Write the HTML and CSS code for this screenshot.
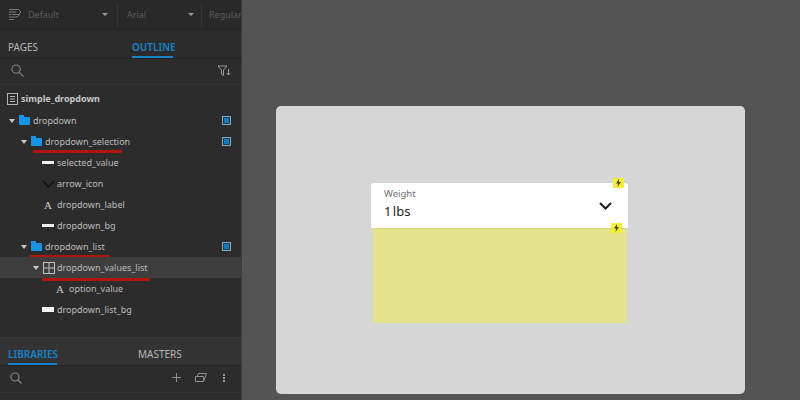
FILE: index.html
```html
<!DOCTYPE html>
<html>
<head>
  <title>simple_dropdown</title>
  <meta name="viewport" content="width=device-width, initial-scale=1">
  <link rel="stylesheet" href="styles.css">
</head>
<body>
  <div class="app">
    <aside class="sidebar">
      <div class="toolbar">
        <svg class="style-icon" width="15" height="14" viewBox="0 0 15 14" fill="none" stroke="#77787a" stroke-width="1">
          <path d="M1 1.500h9.500l2.500 2.500-2.500 2.500H4M1 4h7M1 6.500h2M1 9h8M1 11.500h5M9 9l3-2.500"/>
        </svg>
        <div class="tool-field field-style"><span>Default</span><i class="caret"></i></div>
        <div class="tool-field field-font"><span>Arial</span><i class="caret"></i></div>
        <div class="tool-field field-weight"><span>Regular</span></div>
      </div>

      <div class="tabs tabs-top">
        <div class="tab tab-pages">PAGES</div>
        <div class="tab tab-outline active">OUTLINE</div>
      </div>

      <div class="search-row">
        <svg width="13" height="13" viewBox="0 0 14 14" fill="none" stroke="#8a8a8a" stroke-width="1.100">
          <circle cx="5.500" cy="5.500" r="4.500"/><path d="M9 9l4.500 4.500"/>
        </svg>
        <svg width="14" height="12" viewBox="0 0 14 12" fill="none" stroke="#9a9a9a" stroke-width="1">
          <path d="M1 1h9L6.500 5v5.500L4.500 9V5zM11.500 4v6M9.500 8l2 2 2-2"/>
        </svg>
      </div>

      <div class="tree">
        <div class="row row-page">
          <svg class="page-icon" width="11" height="12" viewBox="0 0 11 12" fill="none" stroke="#b5b5b5"><rect x="0.500" y="0.500" width="10" height="11"/><path d="M3 3.500h5M3 6h5M3 8.500h5"/></svg>
          <span class="page-name">simple_dropdown</span>
        </div>
        <div class="row indent-1">
          <i class="arrow"></i><i class="folder"></i><span>dropdown</span><i class="sym"></i>
        </div>
        <div class="row indent-2">
          <i class="arrow"></i><i class="folder"></i><span>dropdown_selection</span><i class="sym"></i>
          <u class="mark mark-selection"></u>
        </div>
        <div class="row indent-3"><i class="rect"></i><span>selected_value</span></div>
        <div class="row indent-3">
          <svg class="chev" width="13" height="8" viewBox="0 0 13 8" fill="none" stroke="#111" stroke-width="1.600"><path d="M1 1l5.500 6L12 1"/></svg>
          <span>arrow_icon</span>
        </div>
        <div class="row indent-3"><b class="type-a">A</b><span>dropdown_label</span></div>
        <div class="row indent-3"><i class="rect"></i><span>dropdown_bg</span></div>
        <div class="row indent-2">
          <i class="arrow"></i><i class="folder"></i><span>dropdown_list</span><i class="sym"></i>
          <u class="mark mark-list"></u>
        </div>
        <div class="row row-selected indent-2b">
          <i class="arrow"></i>
          <svg class="grid-icon" width="12" height="12" viewBox="0 0 12 12" fill="none" stroke="#c4c4c4"><rect x="0.500" y="0.500" width="11" height="11"/><path d="M6 0.500v11M0.500 6h11"/></svg>
          <span>dropdown_values_list</span>
          <u class="mark mark-values"></u>
        </div>
        <div class="row indent-4"><b class="type-a">A</b><span>option_value</span></div>
        <div class="row indent-3"><i class="rect rect-tall"></i><span>dropdown_list_bg</span></div>
      </div>

      <div class="tabs tabs-bottom">
        <div class="tab tab-libraries active">LIBRARIES</div>
        <div class="tab tab-masters">MASTERS</div>
      </div>

      <div class="lib-row">
        <svg width="12" height="12" viewBox="0 0 12 12" fill="none" stroke="#8a8a8a" stroke-width="1.100">
          <circle cx="5" cy="5" r="4"/><path d="M8 8l3.500 3.500"/>
        </svg>
        <span class="lib-plus">
          <svg width="9" height="9" viewBox="0 0 9 9" stroke="#8f8f8f"><path d="M4.500 0v9M0 4.500h9"/></svg>
        </span>
        <svg class="lib-box" width="12" height="9" viewBox="0 0 12 9" fill="none" stroke="#8f8f8f"><path d="M0.500 3.500h8v5h-8zM2 3.500l1.500-3h8l-3 8"/></svg>
        <span class="lib-dots"><i></i><i></i><i></i></span>
      </div>
    </aside>

    <main class="canvas">
      <div class="artboard">
        <div class="dropdown">
          <div class="dropdown-text">
            <div class="dropdown-label">Weight</div>
            <div class="dropdown-value">1 lbs</div>
          </div>
          <svg width="13" height="8" viewBox="0 0 13 8" fill="none" stroke="#1c1c1c" stroke-width="2"><path d="M1 1l5.500 5.500L12 1"/></svg>
          <span class="bolt bolt-top">
            <svg width="5" height="8" viewBox="0 0 5 8" fill="#4a4a1c"><path d="M3 0L0 4.500h2L1.500 8 5 3H3z"/></svg>
          </span>
        </div>
        <div class="value-list">
          <span class="bolt bolt-list">
            <svg width="5" height="8" viewBox="0 0 5 8" fill="#4a4a1c"><path d="M3 0L0 4.500h2L1.500 8 5 3H3z"/></svg>
          </span>
        </div>
      </div>
    </main>
  </div>
</body>
</html>
```

FILE: styles.css
```css
html, body {
  margin: 0;
  height: 100%;
  overflow: hidden;
}
body {
  font-family: "Noto Sans", "Open Sans", sans-serif;
  font-size: 9px;
  color: #bdbdbd;
  background: #545454;
}
i, u {
  display: block;
  text-decoration: none;
}
.app {
  display: flex;
  width: 800px;
  height: 400px;
}

/* left panel */
.sidebar {
  width: 242px;
  height: 400px;
  flex: none;
  display: flex;
  flex-direction: column;
  padding-bottom: 7px;
  box-sizing: border-box;
  background: #2c2c2c;
  border-right: 1px solid #3c3c3c;
  overflow: hidden;
}
.toolbar {
  height: 30px;
  flex: none;
  display: flex;
  align-items: center;
  padding-left: 8px;
  background: #292929;
  border-bottom: 1px solid #232323;
  box-sizing: border-box;
  color: #5c5c5c;
}
.style-icon {
  flex: none;
  margin-right: 5px;
}
.tool-field {
  height: 24px;
  display: flex;
  align-items: center;
  justify-content: space-between;
  box-sizing: border-box;
  flex: none;
}
.field-style {
  width: 90px;
  padding-right: 9px;
  border-right: 1px solid #363636;
}
.field-font {
  width: 84px;
  padding: 0 7px 0 9px;
  border-right: 1px solid #363636;
}
.field-weight {
  padding-left: 7px;
}
.caret {
  width: 0;
  height: 0;
  border: 3px solid transparent;
  border-top: 3px solid #9a9a9a;
  border-bottom: 0;
}

.tabs {
  flex: none;
  display: flex;
  box-sizing: border-box;
  font-size: 10px;
}
.tabs-top {
  height: 29px;
  padding-top: 10px;
  border-bottom: 1px solid #242424;
}
.tabs-bottom {
  height: 29px;
  padding-top: 9px;
  background: #333;
  border-top: 1px solid #3a3a3a;
  border-bottom: 1px solid #242424;
}
.tab {
  height: 18px;
  color: #b6b6b6;
  box-sizing: border-box;
  line-height: 14px;
}
.tab.active {
  color: #1583c8;
  font-weight: 600;
  border-bottom: 2px solid #1583c8;
}
.tab-pages {
  margin-left: 8px;
  width: 124px;
}
.tab-outline {
  width: 41px;
}
.tab-libraries {
  margin-left: 8px;
  width: 49px;
}
.tab-masters {
  margin-left: 81px;
}

.search-row {
  height: 26px;
  flex: none;
  display: flex;
  align-items: center;
  justify-content: space-between;
  padding: 0 10px 2px 11px;
  box-sizing: border-box;
  border-bottom: 1px solid #333;
}

/* outline tree */
.tree {
  flex: 1;
  padding-top: 3px;
}
.row {
  position: relative;
  height: 21px;
  display: flex;
  align-items: center;
  white-space: nowrap;
}
.row-page {
  padding-left: 7px;
  gap: 3px;
  margin-bottom: 1px;
}
.page-name {
  font-weight: 700;
  color: #c8c8c8;
}
.indent-1 { padding-left: 9px; }
.indent-2 { padding-left: 21px; }
.indent-2b { padding-left: 33px; }
.indent-3 { padding-left: 42px; }
.indent-4 { padding-left: 54px; }
.arrow {
  width: 0;
  height: 0;
  margin-right: 4px;
  border: 3px solid transparent;
  border-top: 4px solid #c8c8c8;
  border-bottom: 0;
}
.folder {
  position: relative;
  width: 11px;
  height: 8px;
  margin: 1px 3px 0 0;
  background: #1794e6;
  border-radius: 0 1px 1px 1px;
}
.folder::before {
  content: "";
  position: absolute;
  left: 0;
  top: -2px;
  width: 5px;
  height: 2px;
  background: #1794e6;
}
.sym {
  position: absolute;
  left: 222px;
  top: 6px;
  width: 7px;
  height: 7px;
  background: #1a78b8;
  border: 1px solid #7fa8c4;
  box-shadow: inset 0 0 0 1px #1f3f55;
}
.rect {
  width: 12px;
  height: 3px;
  margin-right: 3px;
  background: #f2f2f2;
  flex: none;
}
.rect-tall {
  height: 5px;
}
.chev {
  flex: none;
  margin-right: 2px;
}
.type-a {
  width: 12px;
  margin-right: 3px;
  flex: none;
  font-family: "Liberation Serif", serif;
  font-size: 11px;
  font-weight: 400;
  text-align: center;
  color: #d0d0d0;
}
.grid-icon {
  flex: none;
  margin-right: 2px;
}
.row-selected {
  background: #3e3e3e;
}

/* red marks drawn over the tree */
.mark {
  position: absolute;
  height: 3px;
  background: #b3140e;
  border-radius: 1px;
}
.mark-selection {
  left: 33px;
  top: 19px;
  width: 89px;
}
.mark-list {
  left: 29px;
  top: 19px;
  width: 80px;
}
.mark-values {
  left: 42px;
  top: 21px;
  width: 108px;
}

.lib-row {
  height: 27px;
  flex: none;
  display: flex;
  align-items: center;
  padding: 0 0 3px 10px;
  box-sizing: border-box;
  border-bottom: 1px solid #333;
}
.lib-plus {
  margin-left: 150px;
  display: flex;
}
.lib-box {
  margin-left: 14px;
}
.lib-dots {
  margin-left: 16px;
  display: flex;
  flex-direction: column;
  gap: 1px;
}
.lib-dots i {
  width: 2px;
  height: 2px;
  background: #9a9a9a;
}

/* canvas */
.canvas {
  flex: 1;
  padding: 106px 55px 6px 34px;
  box-sizing: border-box;
  background: #545454;
}
.artboard {
  width: 469px;
  height: 288px;
  padding: 77px 0 0 95px;
  box-sizing: border-box;
  background: #d6d6d6;
  border-radius: 5px;
}
.dropdown {
  position: relative;
  width: 257px;
  height: 45px;
  padding: 0 16px 0 13px;
  display: flex;
  align-items: center;
  justify-content: space-between;
  box-sizing: border-box;
  background: #fff;
  border-radius: 3px 3px 0 0;
}
.dropdown-text {
  margin-bottom: 2px;
}
.dropdown-label {
  font-size: 9.500px;
  line-height: 13px;
  color: #6e6e6e;
}
.dropdown-value {
  font-size: 13px;
  line-height: 22px;
  word-spacing: -2px;
  color: #1e1e1e;
}
.value-list {
  position: relative;
  width: 254px;
  height: 95px;
  margin-left: 2px;
  background: #e4e38b;
  border-top: 1px solid #d8d67e;
  box-sizing: border-box;
}
.bolt {
  position: absolute;
  width: 11px;
  height: 10px;
  display: flex;
  align-items: center;
  justify-content: center;
  background: #f4ee3a;
}
.bolt-top {
  right: 4px;
  top: -5px;
}
.bolt-list {
  right: 5px;
  top: -6px;
}
```
